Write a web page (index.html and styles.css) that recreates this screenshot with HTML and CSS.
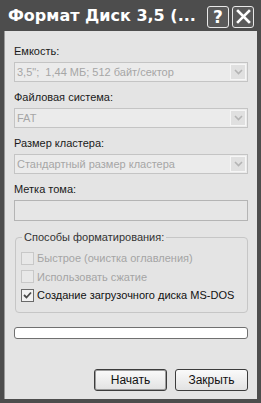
FILE: index.html
```html
<!DOCTYPE html>
<html lang="ru">

<head>
    <meta charset="UTF-8">
    <meta name="viewport" content="width=device-width, initial-scale=1.0">
    <title>Формат Диск 3,5</title>
    <link rel="stylesheet" href="styles.css">
</head>

<body>
    <div class="window">
        <div class="titlebar">
            <span class="title">Формат Диск 3,5 (...</span>
            <div class="title-buttons">
                <div class="tbtn">?</div>
                <div class="tbtn">
                    <svg width="15" height="15" viewBox="0 0 15 15">
                        <path d="M2 2 L13 13 M13 2 L2 13" stroke="#ffffff" stroke-width="2.6" stroke-linecap="square" />
                    </svg>
                </div>
            </div>
        </div>

        <div class="client">
            <div class="field">
                <div class="label">Емкость:</div>
                <div class="combo">
                    <span>3,5";&nbsp; 1,44 МБ; 512 байт/сектор</span>
                    <div class="drop"><svg width="9" height="6" viewBox="0 0 9 6"><path d="M1 1 L4.5 4.5 L8 1" fill="none" stroke="#b4b4b4" stroke-width="1.6" /></svg></div>
                </div>
            </div>
            <div class="field">
                <div class="label">Файловая система:</div>
                <div class="combo">
                    <span>FAT</span>
                    <div class="drop"><svg width="9" height="6" viewBox="0 0 9 6"><path d="M1 1 L4.5 4.5 L8 1" fill="none" stroke="#b4b4b4" stroke-width="1.6" /></svg></div>
                </div>
            </div>
            <div class="field">
                <div class="label">Размер кластера:</div>
                <div class="combo">
                    <span>Стандартный размер кластера</span>
                    <div class="drop"><svg width="9" height="6" viewBox="0 0 9 6"><path d="M1 1 L4.5 4.5 L8 1" fill="none" stroke="#b4b4b4" stroke-width="1.6" /></svg></div>
                </div>
            </div>
            <div class="field">
                <div class="label">Метка тома:</div>
                <div class="textbox"></div>
            </div>

            <fieldset class="group">
                <legend>Способы форматирования:</legend>
                <div class="check disabled"><span class="box"></span>Быстрое (очистка оглавления)</div>
                <div class="check disabled"><span class="box"></span>Использовать сжатие</div>
                <div class="check">
                    <span class="box"><svg width="9" height="9" viewBox="0 0 9 9"><path d="M1 4 L3.5 6.5 L8 1.5" fill="none" stroke="#4a4a4a" stroke-width="1.8" /></svg></span>Создание загрузочного диска MS-DOS
                </div>
            </fieldset>

            <div class="progress"></div>

            <div class="actions">
                <button class="button default">Начать</button>
                <button class="button">Закрыть</button>
            </div>
        </div>
    </div>
</body>

</html>
```

FILE: styles.css
```css
body {
    margin: 0;
    font-family: 'Liberation Sans', Arial, sans-serif;
    font-size: 11px;
    background-color: #4a4a4a;
}

.window {
    width: 261px;
    height: 403px;
    box-sizing: border-box;
    background-color: #4d4d4d;
    padding: 0 4px 4px;
    display: flex;
    flex-direction: column;
}

.titlebar {
    height: 31px;
    display: flex;
    align-items: center;
    justify-content: space-between;
    padding-left: 4px;
}

.title {
    color: #ffffff;
    font-family: 'DejaVu Sans', sans-serif;
    font-weight: bold;
    font-size: 16px;
    white-space: nowrap;
}

.title-buttons {
    display: flex;
    gap: 3px;
    margin-right: 3px;
    margin-top: 2px;
}

.tbtn {
    width: 20px;
    height: 20px;
    border: 1px solid #e8e8e8;
    border-radius: 3px;
    background-color: #5a5a5a;
    color: #ffffff;
    font-family: 'DejaVu Sans', sans-serif;
    font-weight: bold;
    font-size: 17px;
    display: flex;
    align-items: center;
    justify-content: center;
}

.client {
    flex: 1;
    background-color: #e4e4e4;
    border-left: 1px solid #9a9a9a;
    padding: 13px 9px 0 9px;
    display: flex;
    flex-direction: column;
    white-space: nowrap;
}

.field {
    margin-bottom: 8px;
}

.label {
    color: #1a1a1a;
    line-height: 14px;
    margin-bottom: 4px;
}

.combo {
    height: 20px;
    box-sizing: border-box;
    border: 1px solid #c4c4c4;
    background-color: #ebebeb;
    color: #a6a6a6;
    display: flex;
    align-items: center;
    justify-content: space-between;
    padding: 0 1px 0 2px;
}

.drop {
    width: 16px;
    height: 16px;
    box-sizing: border-box;
    border: 1px solid #f6f6f6;
    background-color: #e0e0e0;
    display: flex;
    align-items: center;
    justify-content: center;
}

.textbox {
    height: 21px;
    box-sizing: border-box;
    border: 1px solid #b4b4b4;
    background-color: #e6e6e6;
}

.group {
    margin: 1px 0 0 1px;
    padding: 5px 0 0 5px;
    border: 1px solid #c6c6c6;
    border-radius: 4px;
    height: 83px;
    min-width: 0;
    box-sizing: border-box;
}

.group legend {
    padding: 0 2px;
    margin-left: 1px;
    color: #333333;
    line-height: 14px;
}

.check {
    display: flex;
    align-items: center;
    height: 18.5px;
    color: #111111;
}

.check.disabled {
    color: #a4a4a4;
}

.box {
    width: 13px;
    height: 13px;
    box-sizing: border-box;
    border: 1px solid #6a6a6a;
    background-color: #f2f2f2;
    margin-right: 3px;
    display: flex;
    align-items: center;
    justify-content: center;
}

.disabled .box {
    border-color: #c8c8c8;
    background-color: #e8e8e8;
}

.progress {
    margin-top: 14px;
    height: 12px;
    box-sizing: border-box;
    border: 1px solid #707070;
    border-radius: 3px;
    background-color: #ffffff;
}

.actions {
    margin-top: auto;
    margin-bottom: 8px;
    display: flex;
    justify-content: flex-end;
    gap: 8px;
}

.button {
    width: 73px;
    height: 22px;
    border: 1px solid #3c3c3c;
    border-radius: 3px;
    background: linear-gradient(#fafafa, #e2e2e2);
    font-family: 'Liberation Sans', Arial, sans-serif;
    font-size: 12px;
    color: #111111;
    padding: 0;
}

.button.default {
    box-shadow: inset 0 0 0 1px #9c9c9c;
}
```
